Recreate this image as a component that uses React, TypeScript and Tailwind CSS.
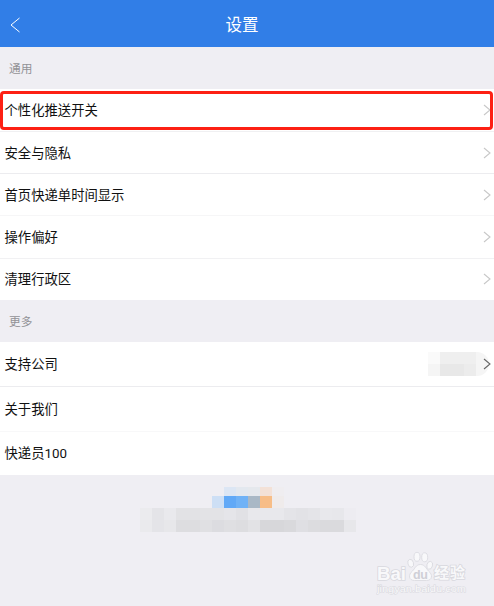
interface ChevronProps {
  className?: string;
}

interface RowProps {
  label: string;
  className: string;
  children?: React.ReactNode;
}

const generalRows = [
  { label: '个性化推送开关', className: 'h-[43px] border-[#f0f0f2]' },
  { label: '安全与隐私', className: 'h-[42px] border-[#ececef]' },
  { label: '首页快递单时间显示', className: 'h-[42px] border-[#f6f6f7]' },
  { label: '操作偏好', className: 'h-[43px] border-[#f1f1f3]' },
  { label: '清理行政区', className: 'h-[41px] border-white' },
];

const logoTop = ['bg-[#efeef3]', 'bg-[#dce6f4]', 'bg-[#e3e8ef]', 'bg-[#e5e8ed]', 'bg-[#f3e1d7]', 'bg-[#efedf0]'];
const logoBottom = ['bg-[#cddff5]', 'bg-[#61a9f7]', 'bg-[#70b2f6]', 'bg-[#a9b8c6]', 'bg-[#f7bd87]', 'bg-[#efebeb]'];

const captionTop = [
  'bg-[#ebebee]', 'bg-[#e4e4e8]', 'bg-[#e9e9ed]', 'bg-[#e2e2e5]', 'bg-[#e2e2e5]', 'bg-[#e3e3e6]',
  'bg-[#e3e3e6]', 'bg-[#e5e5e9]', 'bg-[#e1e1e5]', 'bg-[#e8e8ec]', 'bg-[#e8e8ec]', 'bg-[#e8e8ec]',
  'bg-[#e4e4e8]', 'bg-[#e2e2e6]', 'bg-[#e4e4e8]', 'bg-[#e8e8ec]', 'bg-[#e7e7eb]', 'bg-[#edecf1]',
];
const captionBottom = [
  'bg-[#eaeaed]', 'bg-[#e4e4e8]', 'bg-[#e7e7ea]', 'bg-[#dddde0]', 'bg-[#dddde0]', 'bg-[#e0e0e3]',
  'bg-[#dcdce0]', 'bg-[#dfdfe2]', 'bg-[#dddde0]', 'bg-[#e2e2e5]', 'bg-[#d7d7da]', 'bg-[#d7d7da]',
  'bg-[#d9d9dc]', 'bg-[#dfdfe3]', 'bg-[#dcdcdf]', 'bg-[#dadadd]', 'bg-[#dadadd]', 'bg-[#e7e7ea]',
];

const Chevron = ({ className = 'text-[#c8c8c8]' }: ChevronProps) => (
  <svg viewBox="0 0 8 12" className={`h-3 w-2 shrink-0 ${className}`} fill="none" stroke="currentColor" strokeWidth="1.1">
    <path d="M1 1l6 5-6 5" />
  </svg>
);

const Row = ({ label, className, children }: RowProps) => (
  <div className={`flex items-center justify-between border-b bg-white pl-[4.5px] pr-[3px] ${className}`}>
    <span className="pt-[2px]">{label}</span>
    {children}
  </div>
);

const SectionTitle = ({ children }: { children: React.ReactNode }) => (
  <div className="flex h-[42px] items-center bg-[#efeef3] pl-[9px] pt-px text-[11.7px] text-[#929296]">{children}</div>
);

const Blocks = ({ colors, className }: { colors: string[]; className: string }) => (
  <div className={`flex ${className}`}>
    {colors.map((color, i) => (
      <div key={i} className={`w-3 ${color}`} />
    ))}
  </div>
);

const Watermark = () => (
  <div className="absolute left-[376px] top-[550px] h-[46px] w-[92px]">
    <svg viewBox="0 0 92 46" className="h-full w-full" fill="#f8f8fa" stroke="#d8d8de" strokeWidth="0.8">
      <ellipse cx="34.7" cy="13.3" rx="2.8" ry="4" transform="rotate(-15 34.7 13.3)" />
      <ellipse cx="41" cy="6.8" rx="3" ry="4.5" />
      <ellipse cx="48.7" cy="7.3" rx="3" ry="4.5" />
      <ellipse cx="53.7" cy="15.3" rx="2.8" ry="4" transform="rotate(15 53.7 15.3)" />
      <path d="M44.5 14.5c-4.5 0-5.5 4-8 6.5-4.500 3.500-4 9.500 2 9.500h12c6 0 6.500-6 2-9.500-2.500-2.500-3.500-6.500-8-6.500z" />
      <g fontFamily="Liberation Sans, sans-serif" fontWeight="700" paintOrder="stroke">
        <text x="1" y="29.500" fontSize="17.500" textLength="29" lengthAdjust="spacingAndGlyphs" strokeWidth="1.6">Bai</text>
        <text x="37" y="28.500" fontSize="12.500" textLength="15" fill="#cfcfd6" stroke="none">du</text>
        <text x="1" y="41.500" fontSize="8.500" fontWeight="400" textLength="89" lengthAdjust="spacingAndGlyphs" strokeWidth="0.9">jingyan.baidu.com</text>
      </g>
      <text x="58" y="28" fontSize="15" fontFamily="Noto Sans CJK SC, sans-serif" fontWeight="700" textLength="31" strokeWidth="1.6" paintOrder="stroke">经验</text>
    </svg>
  </div>
);

const App = () => {
  return (
    <div className="relative h-[606px] w-[494px] overflow-hidden bg-[#efeef3] [font-family:Roboto,'Noto_Sans_CJK_SC',sans-serif] text-[13.33px] leading-5 text-[#111]">
      <header className="grid h-[47px] grid-cols-[1fr_auto_1fr] items-center bg-[#317ee7] pt-[3px] text-white">
        <svg viewBox="0 0 10 16" className="ml-[10px] h-4 w-[10px]" fill="none" stroke="currentColor" strokeWidth="1">
          <path d="M9.5 1L1 8l8.5 7" />
        </svg>
        <h1 className="pr-[10px] pt-px text-[16.5px]">设置</h1>
      </header>

      <SectionTitle>通用</SectionTitle>
      <div className="relative">
        {generalRows.map((row) => (
          <Row key={row.label} label={row.label} className={row.className}>
            <Chevron />
          </Row>
        ))}
        <div className="absolute left-0 top-[2px] h-[39px] w-[493px] rounded-[4px] border-3 border-[#fd2014]" />
      </div>

      <SectionTitle>更多</SectionTitle>
      <Row label="支持公司" className="h-[45px] border-[#ececef]">
        <div className="flex items-center">
          <div className="-mr-1.5 grid h-6 w-[61px] grid-cols-[12px_36px_13px] grid-rows-2 overflow-hidden rounded-r-xl">
            <div className="bg-[#fafafa]" />
            <div className="bg-[#efefef]" />
            <div className="bg-[#f5f5f5]" />
            <div className="bg-[#f5f5f5]" />
            <div className="flex">
              <div className="w-6 bg-[#e8e8e8]" />
              <div className="w-3 bg-[#ececec]" />
            </div>
            <div className="bg-[#f5f5f5]" />
          </div>
          <Chevron className="text-[#666]" />
        </div>
      </Row>
      <Row label="关于我们" className="h-[45px] border-[#f8f8f9]" />
      <Row label="快递员100" className="h-[43px] border-white" />

      <footer className="flex flex-col items-center pl-[2px] pt-3">
        <Blocks colors={logoTop} className="h-[9px]" />
        <Blocks colors={logoBottom} className="h-3" />
        <Blocks colors={captionTop} className="h-3" />
        <Blocks colors={captionBottom} className="h-3" />
      </footer>
      <Watermark />
    </div>
  );
};

export default App;
